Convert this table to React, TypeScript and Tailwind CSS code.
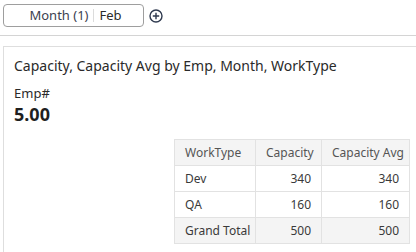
import React from "react";

const rows = [
  { type: "Dev", capacity: 340, avg: 340 },
  { type: "QA", capacity: 160, avg: 160 },
];

const cell = "h-[26px] border border-[#e2e2e2] px-[10px] whitespace-nowrap";

export default function App() {
  return (
    <div
      className="relative h-[252px] w-[416px] overflow-hidden bg-white text-[#333]"
      style={{ fontFamily: '"Noto Sans", "Open Sans", sans-serif' }}
    >
      <div className="flex h-[36px] items-start gap-[5px] border-b border-[#d4d4d4] pl-[3px] pt-[4px]">
        <div className="flex h-[23px] w-[141px] items-center justify-center rounded-[4px] border border-[#9e9e9e] pl-[4px] text-[13px] text-[#3b4150]">
          <span>Month (1)</span>
          <span className="mx-[5px] h-[13px] w-px bg-[#dcdcdc]" />
          <span className="text-[#2b2b2b]">Feb</span>
        </div>
        <svg width="14" height="14" viewBox="0 0 14 14" className="mt-[5px]">
          <circle cx="7" cy="7" r="6" fill="none" stroke="#2f3a4f" strokeWidth="1.4" />
          <path d="M7 3.8v6.4M3.8 7h6.4" stroke="#2f3a4f" strokeWidth="1.4" />
        </svg>
      </div>

      <div className="ml-[3px] mt-[10px] h-[220px] border-l border-t border-[#dedede] pl-[10px] pt-[9px]">
        <div className="text-[14px] leading-[20px] text-[#2a2a2a]">
          Capacity, Capacity Avg by Emp, Month, WorkType
        </div>
        <div className="mt-[8px] text-[13px] leading-[18px] text-[#2a2a2a]">Emp#</div>
        <div className="text-[18px] font-bold leading-[24px] text-[#1f1f1f]">5.00</div>

        <div className="mt-[13px] flex justify-end pr-[6px]">
          <table className="w-[235px] table-fixed border-collapse text-[12px] text-[#3a3a3a]">
            <colgroup>
              <col className="w-[81px]" />
              <col className="w-[66px]" />
              <col className="w-[88px]" />
            </colgroup>
            <thead>
              <tr className="bg-[#f4f4f4]">
                <th className={`${cell} text-left font-normal text-[#555]`}>WorkType</th>
                <th className={`${cell} text-right font-normal text-[#555]`}>Capacity</th>
                <th className={`${cell} text-right font-normal text-[#555]`}>Capacity Avg</th>
              </tr>
            </thead>
            <tbody>
              {rows.map((r) => (
                <tr key={r.type}>
                  <td className={cell}>{r.type}</td>
                  <td className={`${cell} text-right`}>{r.capacity}</td>
                  <td className={`${cell} text-right`}>{r.avg}</td>
                </tr>
              ))}
              <tr className="bg-[#f4f4f4]">
                <td className={cell}>Grand Total</td>
                <td className={`${cell} text-right`}>500</td>
                <td className={`${cell} text-right`}>500</td>
              </tr>
            </tbody>
          </table>
        </div>
      </div>
    </div>
  );
}
